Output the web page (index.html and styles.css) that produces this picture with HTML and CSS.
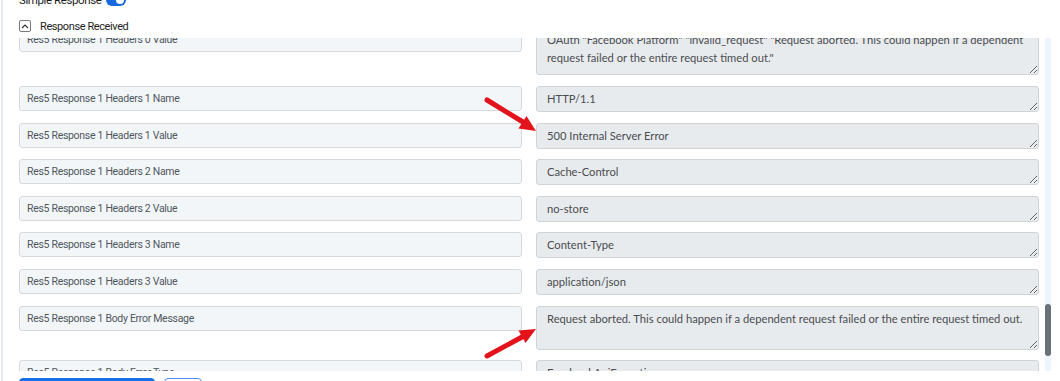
FILE: index.html
```html
<!DOCTYPE html>
<html>
<head>
    <meta charset="utf-8">
    <link rel="stylesheet" href="styles.css">
</head>
<body>

<div class="panel">
    <div class="simple_row">
        <span class="simple_label">Simple Response</span>
        <span class="toggle"><span class="knob"></span></span>
    </div>

    <div class="section_head">
        <span class="collapse_btn">
            <svg width="8" height="6" viewBox="0 0 8 6"><path d="M1 5 L4 2 L7 5" fill="none" stroke="#333" stroke-width="1.2"/></svg>
        </span>
        <span class="section_title">Response Received</span>
    </div>

    <div class="scroll_area">
        <div id="fields" class="fields"></div>
        <div class="scroll_track"><div id="thumb" class="scroll_thumb"></div></div>
    </div>

    <div class="actions">
        <button class="btn btn_primary">Save &amp; Send Test Request</button>
        <button class="btn btn_outline">Save</button>
    </div>
</div>

<svg class="marks" width="1060" height="381" viewBox="0 0 1060 381">
    <line x1="487" y1="100" x2="523" y2="122" stroke="#e3131b" stroke-width="5" stroke-linecap="round"/>
    <polygon points="536,131 518.5,128.5 526.5,116" fill="#e3131b"/>
    <line x1="487" y1="356" x2="522" y2="337" stroke="#e3131b" stroke-width="5" stroke-linecap="round"/>
    <polygon points="536,329 525.5,343 518.5,330.5" fill="#e3131b"/>
</svg>

<script>
    /* поля ответа, которые выше видимой части, генерируются по списку */
    var earlier = [
        ['Headers 0 Name', 'WWW-Authenticate'],
        ['Headers 0 Value', 'OAuth "Facebook Platform"'],
        ['Headers 1 Name', 'HTTP/1.1'],
        ['Headers 1 Value', '200 OK'],
        ['Headers 2 Name', 'Cache-Control'],
        ['Headers 2 Value', 'no-store'],
        ['Headers 3 Name', 'Content-Type'],
        ['Headers 3 Value', 'application/json'],
        ['Body Id', '104857332145']
    ];
    var rows = [];
    for (var r = 0; r < 5; r++) {
        for (var k = 0; k < earlier.length; k++) {
            rows.push({name: 'Res' + r + ' Response 1 ' + earlier[k][0], value: earlier[k][1]});
        }
    }
    rows.push({name: 'Res5 Response 1 Headers 0 Name', value: 'WWW-Authenticate'});
    rows.push({name: 'Res5 Response 1 Headers 0 Value', value: 'OAuth "Facebook Platform" "invalid_request" "Request aborted. This could happen if a dependent request failed or the entire request timed out."', tall: 'h48', anchor: true});
    rows.push({name: 'Res5 Response 1 Headers 1 Name', value: 'HTTP/1.1'});
    rows.push({name: 'Res5 Response 1 Headers 1 Value', value: '500 Internal Server Error'});
    rows.push({name: 'Res5 Response 1 Headers 2 Name', value: 'Cache-Control'});
    rows.push({name: 'Res5 Response 1 Headers 2 Value', value: 'no-store'});
    rows.push({name: 'Res5 Response 1 Headers 3 Name', value: 'Content-Type'});
    rows.push({name: 'Res5 Response 1 Headers 3 Value', value: 'application/json'});
    rows.push({name: 'Res5 Response 1 Body Error Message', value: 'Request aborted. This could happen if a dependent request failed or the entire request timed out.', tall: 'h44'});
    rows.push({name: 'Res5 Response 1 Body Error Type', value: 'FacebookApiException'});
    rows.push({name: 'Res5 Response 1 Body Error Code', value: '1'});
    rows.push({name: 'Res5 Response 1 Body Error Fbtrace Id', value: 'AbXq3Lz9mKd2'});

    var box = document.getElementById('fields');
    var anchor = null;
    for (var i = 0; i < rows.length; i++) {
        var left = document.createElement('input');
        left.className = 'field_name';
        left.readOnly = true;
        left.value = rows[i].name;
        var right = document.createElement('textarea');
        right.className = 'field_value' + (rows[i].tall ? ' ' + rows[i].tall : '');
        right.readOnly = true;
        right.value = rows[i].value;
        box.appendChild(left);
        box.appendChild(right);
        if (rows[i].anchor) anchor = left;
    }
    box.scrollTop = anchor.getBoundingClientRect().top - box.getBoundingClientRect().top + 11;

    // полоса прокрутки рисуется сама, считаем размер и место ползунка
    var track = box.clientHeight;
    var thumbLen = Math.max(20, track * box.clientHeight / box.scrollHeight);
    var thumbTop = box.scrollTop / (box.scrollHeight - box.clientHeight) * (track - thumbLen);
    var thumb = document.getElementById('thumb');
    thumb.style.height = thumbLen + 'px';
    thumb.style.marginTop = thumbTop + 'px';
</script>
</body>
</html>
```

FILE: styles.css
```css
html, body {
    margin: 0;
    background: #fff;
    overflow: hidden;
}
body {
    padding-left: 1px;
    font-family: Roboto, "Liberation Sans", sans-serif;
}
.panel {
    border-left: 2px solid #e4e9f0;
    padding: 0 9px 0 16px;
    height: 420px;
}
.simple_row {
    display: flex;
    align-items: center;
    gap: 5px;
    height: 12px;
    margin-top: -6px;
}
.simple_label {
    font-size: 11.5px;
    letter-spacing: -0.4px;
    color: #1e1e1e;
}
.toggle {
    width: 20px;
    height: 12px;
    border-radius: 6px;
    background: #1769e0;
    display: flex;
    justify-content: flex-end;
    align-items: center;
    padding: 0 2px;
    box-sizing: border-box;
}
.knob {
    width: 8px;
    height: 8px;
    border-radius: 50%;
    background: #fff;
}
.section_head {
    display: flex;
    align-items: center;
    gap: 9px;
    height: 12px;
    margin-top: 14px;
}
.collapse_btn {
    width: 12px;
    height: 12px;
    box-sizing: border-box;
    border: 1px solid #7a7a7a;
    border-radius: 2px;
    display: flex;
    align-items: center;
    justify-content: center;
}
.section_title {
    font-size: 11px;
    letter-spacing: -0.4px;
    color: #1e1e1e;
}
.scroll_area {
    display: flex;
    margin-top: 6px;
    height: 333px;
}
.fields {
    flex: 1;
    overflow: hidden;
    padding: 26px 6px 9px 0;
    box-sizing: border-box;
    display: grid;
    grid-template-columns: 1fr 1fr;
    column-gap: 14px;
    row-gap: 10.67px;
    align-items: start;
}
.scroll_track {
    width: 6px;
    background: #eef5fe;
}
.scroll_thumb {
    width: 6px;
    border-radius: 3px;
    background: #6b7179;
}
.field_name {
    height: 25px;
    box-sizing: border-box;
    border: 1px solid #d5d9de;
    border-radius: 3px;
    background: #f3f6f9;
    padding: 0 7px;
    font-family: Roboto, "Liberation Sans", sans-serif;
    font-size: 10.5px;
    letter-spacing: -0.3px;
    color: #4f565d;
    outline: none;
    min-width: 0;
}
.field_value {
    height: 26px;
    box-sizing: border-box;
    border: 1px solid #cfd4d9;
    border-radius: 3px;
    background: #e8ebee;
    padding: 3px 10px;
    font-family: Lato, "Liberation Sans", sans-serif;
    font-size: 11.2px;
    line-height: 18px;
    color: #4a4d50;
    outline: none;
    min-width: 0;
    overflow: hidden;
}
.field_value.h48 {
    height: 48px;
}
.field_value.h44 {
    height: 44px;
}
.actions {
    display: flex;
    gap: 9px;
    margin-top: 7px;
}
.btn {
    height: 28px;
    border-radius: 4px;
    font-family: Roboto, "Liberation Sans", sans-serif;
    font-size: 11px;
}
.btn_primary {
    width: 136px;
    background: #1a6fe8;
    border: 1px solid #1a6fe8;
    color: #fff;
}
.btn_outline {
    width: 38px;
    background: #fff;
    border: 1px solid #4b8ef5;
    color: #1a6fe8;
}
.marks {
    position: absolute;
    left: 0;
    top: 0;
    pointer-events: none;
}
```
